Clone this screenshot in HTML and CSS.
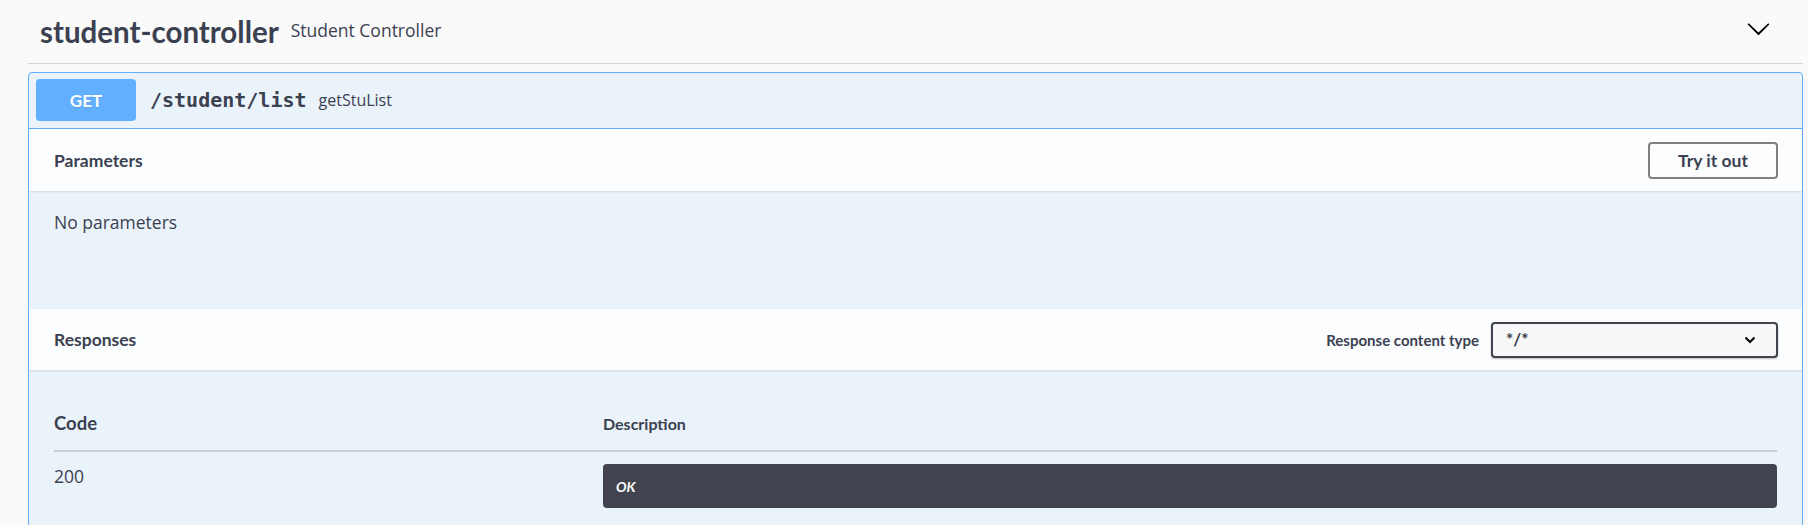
FILE: index.html
```html
<!DOCTYPE html>
<html lang="en">
<head>
<meta charset="utf-8">
<title>student-controller</title>
<link rel="stylesheet" href="styles.css">
</head>
<body>
<div class="page">
  <div class="tag">
    <h3 class="tag-title">student-controller</h3>
    <span class="tag-desc">Student Controller</span>
    <svg class="tag-arrow" viewBox="0 0 20 20" aria-hidden="true"><path d="M17.418 6.109c.272-.268.709-.268.979 0s.271.701 0 .969l-7.908 7.83c-.27.268-.707.268-.979 0l-7.908-7.830c-.27-.268-.27-.701 0-.969.271-.268.709-.268.979 0L10 13.25l7.418-7.141z"/></svg>
  </div>
  <div class="opblock">
    <div class="summary">
      <span class="method">GET</span>
      <span class="path">/student/list</span>
      <span class="summary-desc">getStuList</span>
    </div>
    <div class="section-header">
      <h4 class="section-title">Parameters</h4>
      <button class="try-btn" type="button">Try it out</button>
    </div>
    <div class="params-body">
      <p class="no-params">No parameters</p>
    </div>
    <div class="section-header">
      <h4 class="section-title">Responses</h4>
      <div class="ctype">
        <span class="ctype-label">Response content type</span>
        <div class="select">
          <span class="select-value">*/*</span>
          <svg class="select-arrow" viewBox="0 0 12 8" aria-hidden="true"><path d="M1.5 1.5 6 6l4.5-4.5"/></svg>
        </div>
      </div>
    </div>
    <div class="responses-body">
      <div class="resp-row resp-head">
        <div class="col-code head-code">Code</div>
        <div class="col-desc head-desc">Description</div>
      </div>
      <div class="resp-row resp-item">
        <div class="col-code status">200</div>
        <div class="col-desc">
          <div class="markdown">OK</div>
        </div>
      </div>
    </div>
  </div>
</div>
</body>
</html>
```
FILE: styles.css
```css
body {
  margin: 0;
  background: #fafafa;
  font-family: "Open Sans", sans-serif;
  color: #3b4151;
}

.page {
  margin-left: 28px;
  width: 1775px;
}

.tag {
  display: flex;
  align-items: center;
  height: 64px;
  box-sizing: border-box;
  border-bottom: 1px solid #d2d4d8;
  padding-left: 12px;
  padding-right: 32px;
}

.tag-title {
  margin: 0;
  font: 700 29.5px/36px Lato, sans-serif;
  color: #3b4151;
}

.tag-desc {
  margin-left: 12px;
  margin-bottom: 3px;
  font-size: 17.5px;
}

.tag-arrow {
  margin-left: auto;
  width: 25px;
  height: 25px;
  margin-bottom: 7px;
  fill: #000;
}

.opblock {
  margin-top: 8px;
  border: 1px solid #61affe;
  border-radius: 4px;
  background: rgba(97, 175, 254, 0.1);
}

.summary {
  display: flex;
  align-items: center;
  padding: 6px 7px 7px;
  border-bottom: 1px solid #61affe;
}

.method {
  display: flex;
  align-items: center;
  justify-content: center;
  width: 100px;
  height: 42px;
  background: #61affe;
  color: #fff;
  border-radius: 4px;
  font: 700 17px Lato, sans-serif;
  text-shadow: 0 1px 0 rgba(0, 0, 0, 0.1);
}

.path {
  margin-left: 14px;
  font: 700 20px "DejaVu Sans Mono", monospace;
  color: #3b4151;
}

.summary-desc {
  margin-left: 12px;
  font-size: 16px;
}

.section-header {
  display: flex;
  align-items: center;
  justify-content: space-between;
  box-sizing: border-box;
  height: 62px;
  padding: 0 24px 0 25px;
  background: rgba(255, 255, 255, 0.8);
  box-shadow: 0 1px 2px rgba(0, 0, 0, 0.1);
}

.section-header + .params-body + .section-header {
  height: 61px;
}

.section-title {
  margin: 0;
  font: 700 17.5px Lato, sans-serif;
  color: #3b4151;
}

.try-btn {
  width: 130px;
  height: 37px;
  box-sizing: border-box;
  border: 2px solid #808080;
  border-radius: 4px;
  background: transparent;
  font: 700 17.5px Lato, sans-serif;
  color: #3b4151;
  padding: 0;
}

.params-body {
  height: 118px;
  box-sizing: border-box;
  padding: 19px 25px;
}

.no-params {
  margin: 0;
  font-size: 17.5px;
}

.ctype {
  display: flex;
  align-items: center;
}

.ctype-label {
  margin-right: 12px;
  font: 700 15px Lato, sans-serif;
}

.select {
  display: flex;
  align-items: center;
  justify-content: space-between;
  box-sizing: border-box;
  width: 287px;
  height: 36px;
  padding: 0 20px 0 13px;
  border: 2px solid #41444e;
  border-radius: 4px;
  background: #f7f7f7;
  box-shadow: 0 1px 2px rgba(0, 0, 0, 0.25);
}

.select-value {
  font: 700 17px Lato, sans-serif;
  color: #3b4151;
}

.select-arrow {
  width: 12px;
  height: 8px;
  fill: none;
  stroke: #000;
  stroke-width: 2;
}

.responses-body {
  padding: 25px;
}

.resp-row {
  display: flex;
  align-items: baseline;
}

.col-code {
  width: 549px;
  flex: none;
}

.col-desc {
  flex: 1;
}

.resp-head {
  padding: 17px 0 15px;
  border-bottom: 2px solid rgba(59, 65, 81, 0.2);
  line-height: 22px;
}

.head-code {
  font: 700 18.5px/23px Lato, sans-serif;
}

.head-desc {
  font: 700 16px/22px Lato, sans-serif;
}

.resp-item {
  padding-top: 12px;
  align-items: flex-start;
}

.status {
  font-size: 17.5px;
}

.markdown {
  box-sizing: border-box;
  height: 44px;
  padding: 13px 13px 0;
  border-radius: 4px;
  background: #41444e;
  color: #fff;
  font: italic 700 14px/19px Lato, sans-serif;
}
```
